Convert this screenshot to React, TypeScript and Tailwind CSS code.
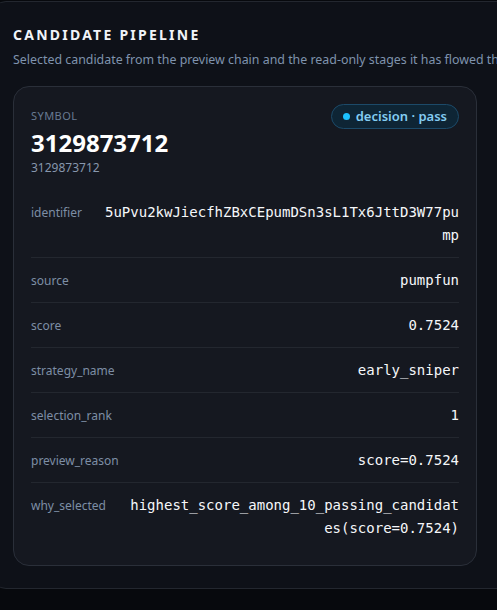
const rows: { label: string; value: string }[] = [
  { label: 'identifier', value: '5uPvu2kwJiecfhZBxCEpumDSn3sL1Tx6JttD3W77pump' },
  { label: 'source', value: 'pumpfun' },
  { label: 'score', value: '0.7524' },
  { label: 'strategy_name', value: 'early_sniper' },
  { label: 'selection_rank', value: '1' },
  { label: 'preview_reason', value: 'score=0.7524' },
  { label: 'why_selected', value: 'highest_score_among_10_passing_candidates(score=0.7524)' },
];

function DecisionBadge() {
  return (
    <div className="flex h-[25px] items-center gap-[6px] rounded-full border border-[#1c4a69] bg-[#0e2535] pl-[11px] pr-[11px]">
      <span className="h-[7px] w-[7px] rounded-full bg-[#1cc2ff]" />
      <span className="text-[13px] font-semibold leading-none text-[#84cdf3]">decision · pass</span>
    </div>
  );
}

export default function App() {
  return (
    <div className="h-[610px] w-[497px] overflow-hidden bg-[#07090d] font-['Noto_Sans',sans-serif]">
      <div className="-ml-[8px] mt-[1px] w-[560px] rounded-[14px] border border-[#23272f] bg-[#0e1118] pb-[22px] pl-[20px] pt-[23px]">
        <h2 className="text-[14px] font-bold uppercase leading-[20px] tracking-[0.16em] text-[#f1f4f8]">Candidate Pipeline</h2>
        <p className="mt-[6px] whitespace-nowrap text-[12.4px] leading-[18px] text-[#7f93ad]">
          Selected candidate from the preview chain and the read-only stages it has flowed through before any action.
        </p>

        <div className="mt-[17px] w-[464px] rounded-[16px] border border-[#2a2f39] bg-[#151820] px-[17px] pb-[15px] pt-[17px]">
          <div className="flex items-start justify-between">
            <div className="flex flex-col">
              <span className="mt-[4px] text-[11px] uppercase leading-[16px] tracking-[0.04em] text-[#687a92]">Symbol</span>
              <span className="mt-[4px] text-[24px] font-bold leading-[30px] text-white">3129873712</span>
              <span className="mt-[1px] text-[12px] leading-[18px] text-[#8797ad]">3129873712</span>
            </div>
            <DecisionBadge />
          </div>

          <div className="mt-[13px] flex flex-col">
            {rows.map((r, i) => (
              <div
                key={r.label}
                className={`flex items-start gap-[20px] pb-[10px] pt-[11px] ${i < rows.length - 1 ? 'border-b border-[#23272f]' : ''}`}
              >
                <span className="shrink-0 text-[12px] leading-[23px] text-[#7d8ea5]">{r.label}</span>
                <span className="min-w-0 flex-1 break-all text-right font-['DejaVu_Sans_Mono',monospace] text-[14px] leading-[23px] text-[#f5f7fa]">
                  {r.value}
                </span>
              </div>
            ))}
          </div>
        </div>
      </div>
    </div>
  );
}
